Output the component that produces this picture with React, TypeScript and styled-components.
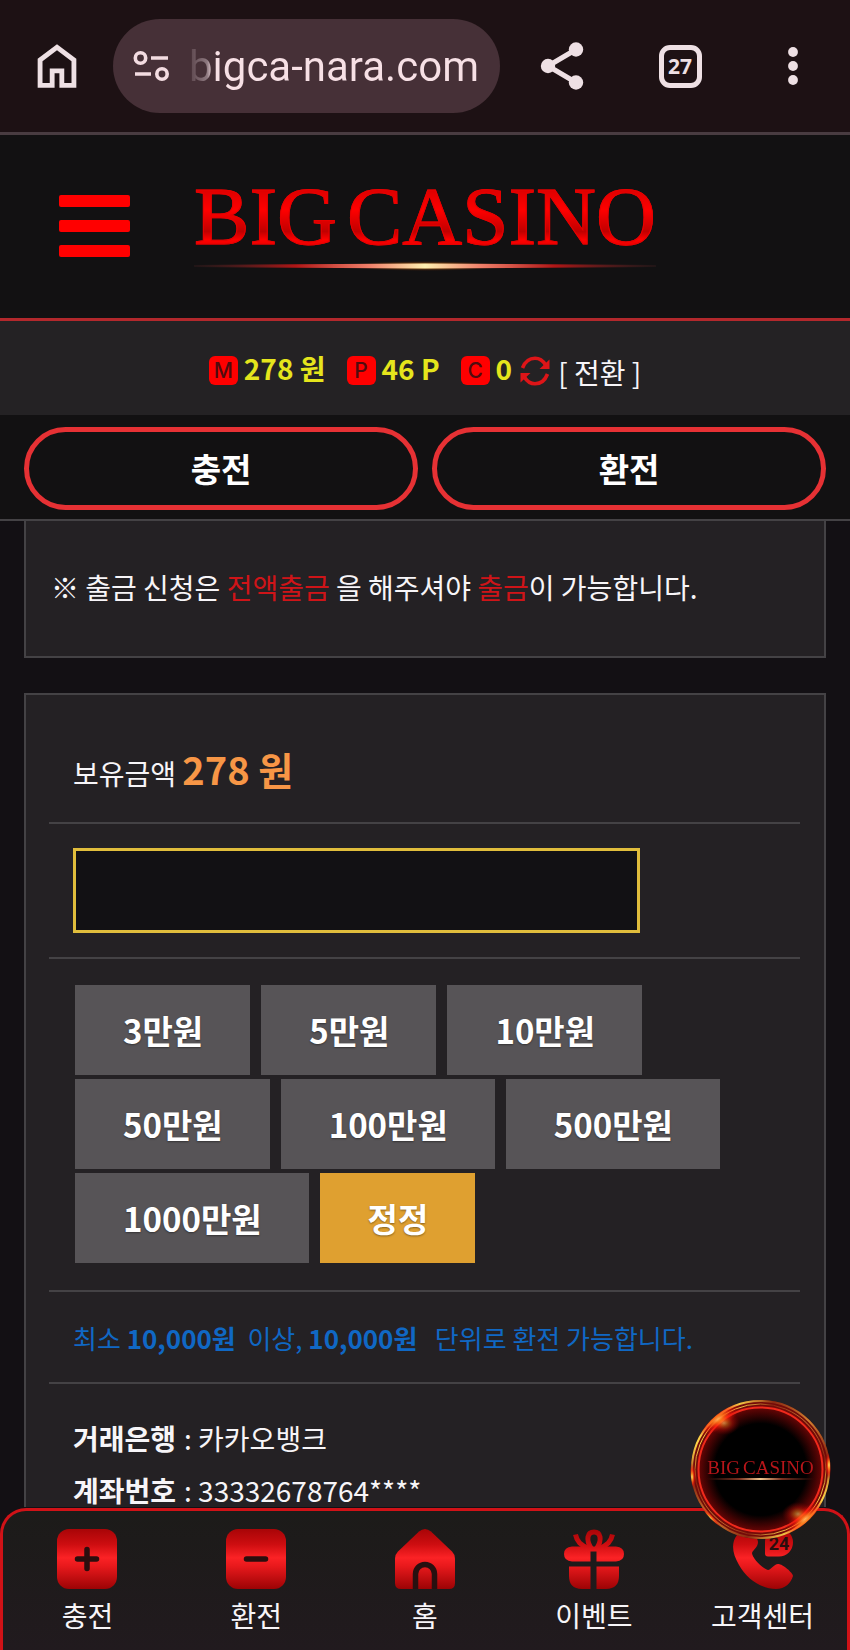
import React from "react";
import styled, { createGlobalStyle } from "styled-components";

const GlobalStyle = createGlobalStyle`
  * { box-sizing: border-box; }
  html, body { margin: 0; background: #131014; }
  body { font-family: "Noto Sans CJK KR", "Noto Sans", sans-serif; color: #f7f5f8; }
  button { font-family: inherit; color: inherit; background: none; border: 0; padding: 0; margin: 0; cursor: pointer; }
  a { color: inherit; text-decoration: none; }
  svg { display: block; }
`;

const Screen = styled.div`
  display: flex;
  flex-direction: column;
  height: 100vh;
  overflow: hidden;
`;

/* Browser toolbar */

const BrowserBar = styled.header`
  display: flex;
  align-items: center;
  flex: none;
  height: 135px;
  padding: 0 32px 0 28px;
  background: #1d1114;
  border-bottom: 3px solid #493c41;
  color: #eee0e4;
`;

const BarButton = styled.button<{ $width: number }>`
  display: flex;
  justify-content: center;
  align-items: center;
  flex: none;
  width: ${(p) => p.$width}px;
  height: 60px;
`;

const AddressPill = styled.div`
  display: flex;
  align-items: center;
  flex: 1;
  min-width: 0;
  height: 94px;
  margin: 0 32px 0 27px;
  padding: 0 16px 0 20px;
  gap: 20px;
  border-radius: 47px;
  background: #463037;
`;

const AddressInput = styled.input`
  flex: 1;
  min-width: 0;
  padding: 2px 0 0;
  border: 0;
  outline: 0;
  background: linear-gradient(90deg, #5a444b 0, #8d787f 18px, #f7e0e5 24px);
  background-clip: text;
  color: transparent;
  font: 42px/60px Roboto, sans-serif;
`;

const BarActions = styled.div`
  display: flex;
  gap: 66px;
`;

const TabCount = styled.span`
  display: flex;
  align-items: center;
  justify-content: center;
  width: 43px;
  height: 43px;
  border: 5px solid #eee0e4;
  border-radius: 11px;
  font: 700 21px/21px "Open Sans", sans-serif;
`;

/* Site header */

const SiteHeader = styled.header`
  display: grid;
  grid-template-columns: 1fr auto 1fr;
  align-items: center;
  flex: none;
  height: 186px;
  padding: 0 59px 2px;
  background: #121112;
  border-bottom: 3px solid #b3282c;
`;

const MenuButton = styled.button`
  display: flex;
  flex-direction: column;
  gap: 13px;
  width: 71px;
`;

const MenuLine = styled.span`
  height: 12px;
  border-radius: 2px;
  background: #ff0000;
`;

const LogoBox = styled.span<{ $space: number }>`
  display: flex;
  flex-direction: column;
  align-items: stretch;
  gap: ${(p) => p.$space}px;
  padding-bottom: ${(p) => p.$space}px;
`;

const LogoWords = styled.span<{ $size: number; $gap: number; $dim?: boolean }>`
  display: flex;
  gap: ${(p) => p.$gap}px;
  font: ${(p) => p.$size}px/1 "Liberation Serif", serif;
  background: ${(p) =>
    p.$dim
      ? "#b81519"
      : "linear-gradient(180deg, #e00000 20%, #ff0000 42%, #c00000 68%, #ff0000 78%, #e00000 88%)"};
  background-clip: text;
  color: transparent;
  -webkit-text-stroke: ${(p) => (p.$dim ? "0" : "1px #e80000")};
`;

/* Balance and actions */

const BalanceBar = styled.section`
  display: flex;
  align-items: center;
  justify-content: center;
  flex: none;
  height: 94px;
  gap: 21px;
  background: #242224;
`;

const Balance = styled.span`
  display: flex;
  align-items: center;
  gap: 6px;
  color: #e5e51c;
  font-size: 28px;
  line-height: 40px;
  font-weight: 700;
`;

const BalanceTag = styled.span`
  display: flex;
  align-items: center;
  justify-content: center;
  width: 29px;
  height: 29px;
  margin-top: 4px;
  border-radius: 6px;
  background: #ff0000;
  color: #4f0c0f;
  font: 500 21px/29px Inter, sans-serif;
`;

const ConvertButton = styled.button`
  padding-top: 8px;
  padding-left: 2px;
  font-size: 28px;
  line-height: 40px;
  font-weight: 400;
  color: #f7f5f8;
`;

const IconButton = styled.button`
  width: 30px;
  height: 30px;
  margin-top: 6px;
  margin-left: 2px;
`;

const QuickActions = styled.nav`
  display: flex;
  flex: none;
  gap: 14px;
  padding: 12px 24px 9px;
  background: #121112;
  border-bottom: 2px solid #444245;
`;

const PillButton = styled.button`
  flex: 1;
  height: 83px;
  padding-bottom: 1px;
  border: 5px solid #e63134;
  border-radius: 42px;
  font-size: 33px;
  font-weight: 700;
  color: #ffffff;
`;

/* Scrolling content */

const Content = styled.main`
  flex: 1;
  min-height: 0;
  overflow-y: auto;
  scrollbar-width: none;
  padding: 0 24px;
`;

const Notice = styled.section`
  padding: 46px 25px 49px;
  background: #242124;
  border: solid #444245;
  border-width: 0 2px 2px;
  font-size: 28px;
  line-height: 40px;
`;

const Alert = styled.span`
  color: #cf1418;
`;

const FormPanel = styled.form`
  margin-top: 35px;
  padding: 0 24px 0 23px;
  background: #242124;
  border: 2px solid #444245;
  border-bottom: 0;
`;

const FormRow = styled.div<{ $top: number; $bottom: number }>`
  padding: ${(p) => p.$top}px 24px ${(p) => p.$bottom}px;
  border-bottom: 2px solid #444245;
  font-size: 28px;
`;

const Holding = styled.strong`
  color: #f79646;
  font-size: 38px;
  line-height: 56px;
`;

const AmountInput = styled.input`
  display: block;
  width: calc(100% - 136px);
  height: 85px;
  padding: 0 20px;
  border: 3px solid #e0bd3c;
  background: #121114;
  color: #ffffff;
  font: 28px "Noto Sans CJK KR", sans-serif;
  outline: 0;
`;

const AmountList = styled.div`
  display: flex;
  flex-wrap: wrap;
  gap: 4px 11px;
  padding-left: 2px;
`;

const AmountButton = styled.button<{ $reset?: boolean }>`
  height: 90px;
  padding: 0 47px 0 48px;
  background: ${(p) => (p.$reset ? "#dfa030" : "#575457")};
  color: #ffffff;
  font-size: 33px;
  font-weight: 700;
  text-shadow: 0 1px 2px rgba(0, 0, 0, 0.4);
`;

const LimitNote = styled.p`
  margin: 0;
  color: #1068c4;
  font-size: 26px;
  line-height: 40px;
  white-space: pre-wrap;
`;

const BankInfo = styled.dl`
  display: flex;
  flex-direction: column;
  gap: 18px;
  margin: 0;
  padding: 37px 24px 0;
  font-size: 28px;
  line-height: 34px;
`;

const BankLine = styled.div`
  display: flex;
  gap: 8px;

  dt { font-weight: 700; }
  dd { margin: 0; }
`;

/* Bottom navigation */

const TabBar = styled.nav`
  position: relative;
  display: grid;
  grid-template-columns: repeat(5, 1fr);
  flex: none;
  height: 142px;
  padding-top: 18px;
  background: linear-gradient(180deg, #1c1b19, #211a1e);
  border: 3px solid #d01217;
  border-bottom: 0;
  border-radius: 26px 26px 0 0;
`;

const TabLink = styled.a`
  display: flex;
  flex-direction: column;
  align-items: center;
  gap: 6px;
  font-size: 28px;
  line-height: 40px;
`;

const ChatBadge = styled.button`
  position: absolute;
  top: -112px;
  right: 16px;
  display: grid;
  place-items: center;
  width: 141px;
  height: 141px;

  > * { grid-area: 1 / 1; }
`;

function HomeOutline() {
  return (
    <svg width="58" height="58" viewBox="0 0 24 24" fill="currentColor" aria-hidden="true">
      <path d="M6 19h3v-6h6v6h3v-9l-6-4.5L6 10zM4 21V9l8-6 8 6v12h-7v-6h-2v6z" />
    </svg>
  );
}

function SiteSettings() {
  return (
    <svg width="36" height="32" viewBox="0 0 36 32" fill="none" stroke="#f3dce1" strokeWidth="3.6" aria-hidden="true">
      <circle cx="7.5" cy="8" r="5.2" />
      <path d="M18 8h17M2 24h16" />
      <circle cx="29" cy="24" r="5.2" />
    </svg>
  );
}

function ShareIcon() {
  return (
    <svg width="44" height="50" viewBox="0 0 44 50" fill="currentColor" aria-hidden="true">
      <path d="M36 8.500 8 25l28 16.500" fill="none" stroke="currentColor" strokeWidth="5" />
      <circle cx="8" cy="25" r="7.200" />
      <circle cx="36" cy="8.500" r="7.200" />
      <circle cx="36" cy="41.500" r="7.200" />
    </svg>
  );
}

function DotsIcon() {
  return (
    <svg width="12" height="40" viewBox="0 0 12 40" fill="currentColor" aria-hidden="true">
      <circle cx="6" cy="6" r="4.900" />
      <circle cx="6" cy="20" r="4.900" />
      <circle cx="6" cy="34" r="4.900" />
    </svg>
  );
}

function RefreshIcon() {
  return (
    <svg width="30" height="30" viewBox="0 0 30 30" aria-hidden="true">
      <g fill="none" stroke="#dd1518" strokeWidth="3.6">
        <path d="M2.500 12C5 5.500 9.500 2.200 15 2.200c4.500 0 8 2.400 10.500 6.500" />
        <path d="M27.500 18C25 24.500 20.500 27.800 15 27.800c-4.500 0-8-2.400-10.500-6.500" />
      </g>
      <path d="M29.500 3.500v9.500H19.500zM.5 26.500V17h10z" fill="#dd1518" />
    </svg>
  );
}

function LogoFlare() {
  return (
    <svg width="100%" height="12" viewBox="0 0 460 12" preserveAspectRatio="none" aria-hidden="true">
      <defs>
        <linearGradient id="flare">
          <stop offset="0" stopColor="#5a2828" stopOpacity="0.2" />
          <stop offset="0.22" stopColor="#b01616" />
          <stop offset="0.38" stopColor="#f0806a" />
          <stop offset="0.5" stopColor="#fff0b0" />
          <stop offset="0.62" stopColor="#f0806a" />
          <stop offset="0.78" stopColor="#b01616" />
          <stop offset="1" stopColor="#5a2828" stopOpacity="0.2" />
        </linearGradient>
        <radialGradient id="flareGlow">
          <stop offset="0" stopColor="#e8a030" />
          <stop offset="0.5" stopColor="#9c5a18" stopOpacity="0.7" />
          <stop offset="1" stopColor="#602000" stopOpacity="0" />
        </radialGradient>
      </defs>
      <ellipse cx="230" cy="5" rx="80" ry="5" fill="url(#flareGlow)" />
      <path d="M0 4Q115 3 230 2.500Q345 3 460 4V6Q345 7 230 7.500Q115 7 0 6Z" fill="url(#flare)" />
    </svg>
  );
}

function RedShade({ id }: { id: string }) {
  return (
    <defs>
      <linearGradient id={id} gradientUnits="userSpaceOnUse" x1="0" y1="0" x2="0" y2="60">
        <stop offset="0" stopColor="#a80507" />
        <stop offset="0.25" stopColor="#cc0d10" />
        <stop offset="0.48" stopColor="#fb2225" />
        <stop offset="0.62" stopColor="#e8191c" />
        <stop offset="1" stopColor="#9c0305" />
      </linearGradient>
    </defs>
  );
}

function TabIcon({ children, id }: { children: React.ReactNode; id: string }) {
  return (
    <svg width="60" height="60" viewBox="0 0 60 60" fill={`url(#${id})`} aria-hidden="true">
      <RedShade id={id} />
      {children}
    </svg>
  );
}

const DARK = "#2a0e0e";

const TABS = [
  {
    label: "충전",
    icon: (
      <TabIcon id="shadeDeposit">
        <rect width="60" height="60" rx="12" />
        <path d="M30 20.500v19M20.500 30h19" stroke={DARK} strokeWidth="5.500" strokeLinecap="round" />
      </TabIcon>
    ),
  },
  {
    label: "환전",
    icon: (
      <TabIcon id="shadeWithdraw">
        <rect width="60" height="60" rx="12" />
        <path d="M20.500 30h19" stroke={DARK} strokeWidth="5.500" strokeLinecap="round" />
      </TabIcon>
    ),
  },
  {
    label: "홈",
    icon: (
      <TabIcon id="shadeHome">
        <path d="M24 2.500Q30-2.500 36 2.500L57 22.500Q60 25.500 60 29.500V54Q60 60 54 60H6Q0 60 0 54V29.500Q0 25.500 3 22.500Z" />
        <path d="M20.500 60V45a9.500 9.500 0 0 1 19 0V60" fill="none" stroke="#281010" strokeWidth="5.500" />
      </TabIcon>
    ),
  },
  {
    label: "이벤트",
    icon: (
      <TabIcon id="shadeGift">
        <path d="M26.500 37.500V60H18C9 60 5 55 5 47V37.500ZM32.500 37.500H55V47C55 55 51 60 42 60H32.500Z" />
        <path d="M8 17.500H52Q60 18 60 25T52 32.500H32.500V22.500H26.500V32.500H8Q0 32 0 25T8 17.500Z" />
        <g fill="none" stroke="url(#shadeGift)" strokeWidth="5">
          <path d="M11.500 5.500C13 13 17 16 24 19M48.500 5.500C47 13 43 16 36 19" />
          <path d="M27 19C22 11 23 3 30 3S38 11 33 19" />
        </g>
      </TabIcon>
    ),
  },
  {
    label: "고객센터",
    icon: (
      <TabIcon id="shadeCall">
        <path d="M4 6C-2 14-1 24 6 36C14 50 28 60 43 60C52 60 58 54 60 47C60 44 50 35 45 35C41 35 38 41 35 41C30 40 19 29 19 24C20 21 25 18 25 13C25 9 18 0 14 0C10 0 7 3 4 6Z" />
        <path d="M32 13.500a14 14 0 1 1 14 14H35q-3 0-3-3Z" />
        <text x="46" y="21" textAnchor="middle" fill={DARK} fontFamily="Roboto, sans-serif" fontWeight="700" fontSize="18">
          24
        </text>
      </TabIcon>
    ),
  },
];

function BadgeRing() {
  return (
    <svg width="141" height="141" viewBox="0 0 141 141" aria-hidden="true">
      <defs>
        <linearGradient id="ringGold" x1="0" y1="0" x2="1" y2="1">
          <stop offset="0" stopColor="#a8541c" />
          <stop offset="0.17" stopColor="#ffd84a" />
          <stop offset="0.3" stopColor="#8a2a12" />
          <stop offset="0.5" stopColor="#d08030" />
          <stop offset="0.7" stopColor="#8a2a12" />
          <stop offset="0.84" stopColor="#ffd84a" />
          <stop offset="1" stopColor="#a8541c" />
        </linearGradient>
        <radialGradient id="ringSpark">
          <stop offset="0" stopColor="#fff27a" />
          <stop offset="0.25" stopColor="#ff8a1e" stopOpacity="0.9" />
          <stop offset="0.55" stopColor="#ff1a0a" stopOpacity="0.6" />
          <stop offset="1" stopColor="#c00000" stopOpacity="0" />
        </radialGradient>
        <radialGradient id="ringCore">
          <stop offset="0.74" stopColor="#000000" />
          <stop offset="1" stopColor="#680505" />
        </radialGradient>
        <clipPath id="ringClip">
          <circle cx="70.500" cy="70.500" r="70" />
        </clipPath>
      </defs>
      <circle cx="70.500" cy="70.500" r="69.500" fill="#740a08" />
      <circle cx="70.500" cy="70.500" r="62" fill="url(#ringCore)" />
      <circle cx="70.500" cy="70.500" r="68.500" fill="none" stroke="url(#ringGold)" strokeWidth="2" />
      <circle cx="70.500" cy="70.500" r="65.500" fill="none" stroke="url(#ringGold)" strokeWidth="1" />
      <circle cx="70.500" cy="70.500" r="62" fill="none" stroke="#f02a1c" strokeWidth="2" />
      <g clipPath="url(#ringClip)" fill="url(#ringSpark)">
        <ellipse cx="28" cy="20" rx="26" ry="10" transform="rotate(-35 28 20)" />
        <ellipse cx="34" cy="24" rx="16" ry="12" opacity="0.5" />
        <ellipse cx="115" cy="120" rx="26" ry="10" transform="rotate(-40 115 120)" />
        <ellipse cx="108" cy="115" rx="16" ry="12" opacity="0.5" />
        <ellipse cx="2" cy="78" rx="4" ry="14" />
        <ellipse cx="139" cy="66" rx="4" ry="14" />
        <ellipse cx="20" cy="119" rx="16" ry="4" transform="rotate(46 20 119)" />
      </g>
    </svg>
  );
}

const SmallFlare = styled.span`
  height: 2px;
  background: linear-gradient(90deg, transparent, #7a3020 30%, #f0c890 50%, #7a3020 70%, transparent);
`;

function Logo({ size, gap, small }: { size: number; gap: number; small?: boolean }) {
  return (
    <LogoBox $space={small ? 1 : 3}>
      <LogoWords $size={size} $gap={gap} $dim={small}>
        <span>BIG</span>
        <span>CASINO</span>
      </LogoWords>
      {small ? <SmallFlare /> : <LogoFlare />}
    </LogoBox>
  );
}

const AMOUNTS = ["3만원", "5만원", "10만원", "50만원", "100만원", "500만원", "1000만원"];

export default function App() {
  return (
    <Screen>
      <GlobalStyle />
      <BrowserBar>
        <BarButton $width={58} aria-label="Home">
          <HomeOutline />
        </BarButton>
        <AddressPill>
          <SiteSettings />
          <AddressInput aria-label="Address" defaultValue="bigca-nara.com" />
        </AddressPill>
        <BarActions>
          <BarButton $width={60} aria-label="Share">
            <ShareIcon />
          </BarButton>
          <BarButton $width={44} aria-label="Tabs">
            <TabCount>27</TabCount>
          </BarButton>
          <BarButton $width={50} aria-label="More">
            <DotsIcon />
          </BarButton>
        </BarActions>
      </BrowserBar>

      <SiteHeader>
        <MenuButton aria-label="메뉴">
          <MenuLine />
          <MenuLine />
          <MenuLine />
        </MenuButton>
        <a href="#home">
          <Logo size={83} gap={10} />
        </a>
      </SiteHeader>

      <BalanceBar>
        <Balance>
          <BalanceTag>M</BalanceTag>278 원
        </Balance>
        <Balance>
          <BalanceTag>P</BalanceTag>46 P
        </Balance>
        <Balance>
          <BalanceTag>C</BalanceTag>0
          <IconButton aria-label="새로고침">
            <RefreshIcon />
          </IconButton>
          <ConvertButton>[ 전환 ]</ConvertButton>
        </Balance>
      </BalanceBar>

      <QuickActions>
        <PillButton>충전</PillButton>
        <PillButton>환전</PillButton>
      </QuickActions>

      <Content>
        <Notice>
          ※ 출금 신청은 <Alert>전액출금</Alert> 을 해주셔야 <Alert>출금</Alert>이 가능합니다.
        </Notice>

        <FormPanel onSubmit={(e) => e.preventDefault()}>
          <FormRow $top={46} $bottom={25}>
            <label htmlFor="amount">보유금액</label> <Holding>278 원</Holding>
          </FormRow>
          <FormRow $top={24} $bottom={24}>
            <AmountInput id="amount" inputMode="numeric" />
          </FormRow>
          <FormRow $top={26} $bottom={27}>
            <AmountList>
              {AMOUNTS.map((amount) => (
                <AmountButton key={amount} type="button">
                  {amount}
                </AmountButton>
              ))}
              <AmountButton type="reset" $reset>
                정정
              </AmountButton>
            </AmountList>
          </FormRow>
          <FormRow $top={26} $bottom={24}>
            <LimitNote>
              최소 <b>10,000원</b>{"  이상, "}
              <b>10,000원</b>{"   단위로 환전 가능합니다."}
            </LimitNote>
          </FormRow>
          <BankInfo>
            <BankLine>
              <dt>거래은행</dt>
              <dd>: 카카오뱅크</dd>
            </BankLine>
            <BankLine>
              <dt>계좌번호</dt>
              <dd>: 33332678764****</dd>
            </BankLine>
          </BankInfo>
        </FormPanel>
      </Content>

      <TabBar>
        {TABS.map((tab) => (
          <TabLink key={tab.label} href={`#${tab.label}`}>
            {tab.icon}
            {tab.label}
          </TabLink>
        ))}
        <ChatBadge aria-label="BIG CASINO 상담">
          <BadgeRing />
          <Logo size={19} gap={3} small />
        </ChatBadge>
      </TabBar>
    </Screen>
  );
}
